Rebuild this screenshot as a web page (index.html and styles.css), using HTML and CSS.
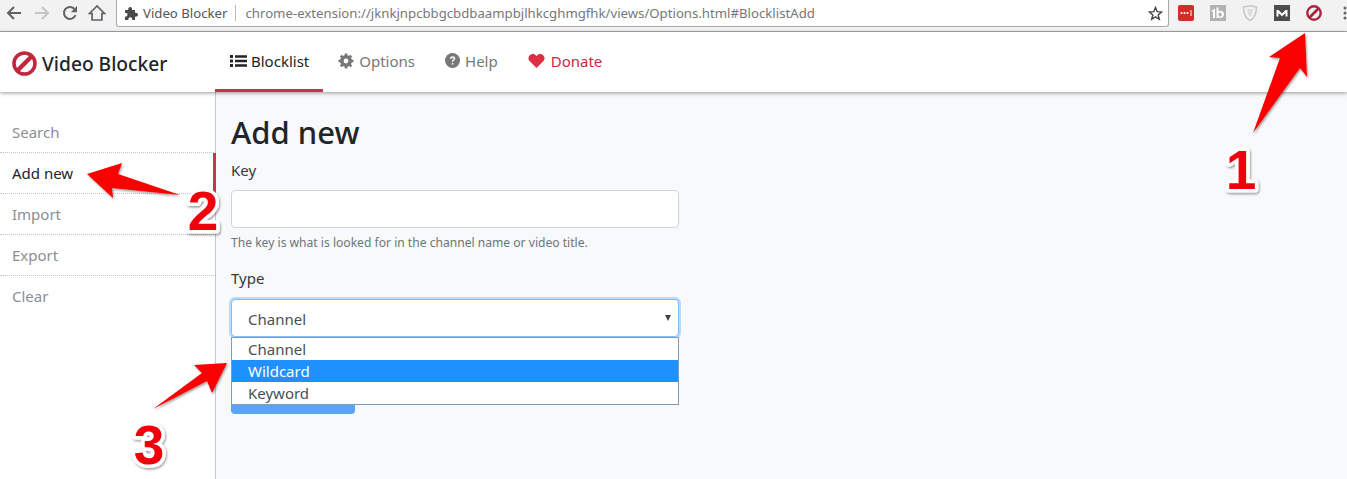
FILE: index.html
```html
<!DOCTYPE html>
<html lang="en">
<head>
<meta charset="utf-8">
<title>Video Blocker</title>
<link rel="stylesheet" href="styles.css">
</head>
<body>
<div class="chrome">
  <svg class="tb-ico back" width="16" height="16" viewBox="0 0 16 16"><path d="M15 8H2M8 2 2 8l6 6" fill="none" stroke="#5f6368" stroke-width="2"/></svg>
  <svg class="tb-ico fwd" width="16" height="16" viewBox="0 0 16 16"><path d="M1 8h13M8 2l6 6-6 6" fill="none" stroke="#c4c4c4" stroke-width="2"/></svg>
  <svg class="tb-ico reload" width="16" height="16" viewBox="0 0 16 16"><path d="M13.5 10.2A6 6 0 1 1 12.3 3.8" fill="none" stroke="#5f6368" stroke-width="2"/><path d="M15 1v6.2H8.8z" fill="#5f6368"/></svg>
  <svg class="tb-ico home" width="18" height="18" viewBox="0 0 18 18"><path d="M9 2 1.5 9.5h2.6V16h9.8V9.500h2.600z" fill="none" stroke="#5f6368" stroke-width="1.700"/></svg>
  <div class="omnibox">
    <svg class="puzzle" width="13" height="13" viewBox="0 0 13 13"><path d="M0 3h3.200C3 1 4 0 5.200 0s2.100 1 1.900 3H10v2.800c2-.3 3 .7 3 1.900s-1 2.200-3 1.900V13H7.200c.3-1.800-.7-2.700-1.900-2.700S3.100 11.200 3.400 13H0V9.600c1.600.2 2.500-.7 2.500-1.900S1.600 5.700 0 5.900z" fill="#4a4a4a"/></svg>
    <span class="site">Video Blocker</span>
    <span class="sep"></span>
    <span class="url">chrome-extension://jknkjnpcbbgcbdbaampbjlhkcghmgfhk/views/Options.html#BlocklistAdd</span>
    <svg class="star" width="15" height="15" viewBox="0 0 15 15"><path d="M7.500 1.500 9.200 5.700l4.500.3-3.500 2.900 1.100 4.400-3.800-2.400-3.800 2.400 1.100-4.400L1.300 6l4.500-.3z" fill="none" stroke="#444" stroke-width="1.400"/></svg>
  </div>
  <div class="exts">
    <svg width="16" height="16" viewBox="0 0 16 16"><rect width="16" height="16" rx="2" fill="#d32d27"/><g fill="#fff"><circle cx="3.500" cy="8" r="1.100"/><circle cx="6.500" cy="8" r="1.100"/><circle cx="9.500" cy="8" r="1.100"/><rect x="12.500" y="5" width="1" height="6"/></g></svg>
    <svg width="16" height="16" viewBox="0 0 16 16"><rect width="16" height="16" fill="#b3b3b3"/><path d="M1.500 5.500 5 3.500V13H3V6.500l-1.500.6zM6.500 2.500h2V6.300C10 5.300 14 5.700 14 9.300S10 14 8.500 12.300V13h-2zM8.500 8v3c1 .9 3.300.7 3.300-1.500S9.500 7.100 8.500 8z" fill="#fff"/></svg>
    <svg width="16" height="16" viewBox="0 0 16 16"><path d="M1.500 2 8 .8 14.500 2c0 6-1 10.500-6.500 13.500C2.500 12.500 1.500 8 1.500 2z" fill="none" stroke="#c6c8c6" stroke-width="1.500"/><path d="M5 4h6L9.200 11H6.800z" fill="#dcdedc"/></svg>
    <svg width="16" height="16" viewBox="0 0 16 16"><rect width="16" height="16" fill="#4d4d4d"/><path d="M2.500 11.500V5h2L8 8.500 11.500 5h2v6.500h-2V8L8 11.200 4.500 8v3.500z" fill="#fff"/></svg>
    <svg width="16" height="16" viewBox="0 0 16 16"><circle cx="8" cy="8" r="6.700" fill="none" stroke="#b0243f" stroke-width="2.400"/><path d="M3.500 12.500l9-9" stroke="#b0243f" stroke-width="2.800"/></svg>
    <svg class="dots" width="4" height="14" viewBox="0 0 4 14"><g fill="#666"><circle cx="2" cy="2" r="1.500"/><circle cx="2" cy="7" r="1.500"/><circle cx="2" cy="12" r="1.500"/></g></svg>
  </div>
</div>

<header class="navbar">
  <div class="brand">
    <svg width="25" height="25" viewBox="0 0 25 25"><circle cx="12.500" cy="12.500" r="10.500" fill="#fff" stroke="#c2263f" stroke-width="3.600"/><path d="M5 20 20 5" stroke="#c2263f" stroke-width="4.400"/></svg>
    <span>Video Blocker</span>
  </div>
  <nav class="tabs">
    <a class="tab active">
      <svg width="17" height="14" viewBox="0 0 17 14"><path d="M0 1h3v3H0zM0 5.500h3v3H0zM0 10h3v3H0zM5 1.200h12v2.600H5zM5 5.700h12v2.600H5zM5 10.200h12v2.600H5z" fill="#212529"/></svg>
      Blocklist
    </a>
    <a class="tab">
      <svg width="16" height="16" viewBox="0 0 16 16"><circle cx="8" cy="8" r="4.300" fill="none" stroke="#777" stroke-width="3.400"/><path d="M8 .5v15M.5 8h15M2.700 2.700l10.600 10.600M13.300 2.700 2.700 13.300" stroke="#777" stroke-width="2.600"/><circle cx="8" cy="8" r="2.400" fill="#fff"/></svg>
      Options
    </a>
    <a class="tab">
      <svg width="15" height="15" viewBox="0 0 15 15"><circle cx="7.500" cy="7.500" r="7.500" fill="#777"/><path d="M4.900 5.600c.2-3 5.400-3 5.400 0 0 1.800-2.100 1.800-2.100 3.200H6.800C6.800 6.800 8.700 6.800 8.700 5.600c0-1.200-2-1.100-2.200.3z" fill="#fff"/><rect x="6.800" y="10" width="1.500" height="1.600" fill="#fff"/></svg>
      Help
    </a>
    <a class="tab donate">
      <svg width="17" height="15" viewBox="0 0 17 15"><path d="M8.500 15 1.300 7.700C-2 3.500 4.800-2.200 8.500 3c3.700-5.200 10.500.5 7.200 4.700z" fill="#dc2f45"/></svg>
      Donate
    </a>
  </nav>
</header>

<div class="body">
  <aside class="sidebar">
    <a class="side-item">Search</a>
    <a class="side-item current">Add new</a>
    <a class="side-item">Import</a>
    <a class="side-item">Export</a>
    <a class="side-item last">Clear</a>
  </aside>
  <main class="content">
    <h1>Add new</h1>
    <form class="form">
      <label class="label">Key</label>
      <div class="input"></div>
      <p class="help">The key is what is looked for in the channel name or video title.</p>
      <label class="label type-label">Type</label>
      <div class="select-wrap">
        <div class="select">Channel<span class="caret"></span></div>
        <ul class="dropdown">
          <li>Channel</li>
          <li class="hl">Wildcard</li>
          <li>Keyword</li>
        </ul>
      </div>
      <div class="button"></div>
    </form>
  </main>
</div>

<svg class="annot" width="1347" height="479" viewBox="0 0 1347 479">
  <defs><filter id="sh" x="-20%" y="-20%" width="140%" height="140%"><feDropShadow dx="1" dy="1.500" stdDeviation="1.200" flood-color="#000" flood-opacity=".4"/></filter></defs>
  <g fill="#fb0006" filter="url(#sh)">
    <path d="M1305 33 1269 57 1280 58 1253 133 1300 68 1307 77z"/>
    <path d="M87 174 122 163 118 174 180 195 112 188 113 198z"/>
    <path d="M227 363 194 365 202 373 153 409 207 381 212 393z"/>
  </g>
  <g class="num" filter="url(#sh)">
    <text x="1241" y="189">1</text>
    <text x="203" y="230">2</text>
    <text x="149" y="464">3</text>
  </g>
</svg>
</body>
</html>
```

FILE: styles.css
```css
* { box-sizing: border-box; }
html, body { margin: 0; padding: 0; }
body {
  position: relative;
  width: 1347px;
  height: 479px;
  overflow: hidden;
  background: #fff;
  font-family: "Noto Sans", "Open Sans", sans-serif;
  color: #212529;
}

.chrome {
  display: flex;
  align-items: flex-start;
  height: 32px;
  background: #f2f2f2;
  border-bottom: 1px solid #a9a9a9;
}
.tb-ico { flex: none; margin-top: 5px; }
.back { margin-left: 6px; }
.fwd { margin-left: 12px; }
.reload { margin-left: 12px; }
.home { margin-left: 10px; margin-top: 4px; }
.omnibox {
  flex: none;
  display: flex;
  align-items: center;
  width: 1053px;
  height: 27px;
  margin-left: 10px;
  padding-left: 8px;
  background: #fff;
  border: 1px solid #a9a9a9;
  border-top: 0;
  border-radius: 0 0 3px 3px;
  font-size: 13.200px;
  white-space: nowrap;
}
.puzzle { flex: none; }
.site { margin-left: 5px; color: #555; }
.sep { width: 1px; height: 16px; margin: 0 9px 0 8px; background: #bbb; }
.url { color: #777; flex: 1; }
.star { flex: none; margin-right: 5px; }
.exts {
  display: flex;
  align-items: flex-start;
  gap: 16px;
  margin-left: 9px;
  padding-top: 5px;
}
.exts svg { flex: none; }
.exts .dots { margin-left: 5px; margin-top: 1px; }

.navbar {
  position: relative;
  z-index: 2;
  display: flex;
  align-items: stretch;
  height: 60px;
  background: #fff;
  box-shadow: 0 1px 4px rgba(0, 0, 0, .4);
}
.brand {
  display: flex;
  align-items: center;
  gap: 5px;
  width: 215px;
  padding: 3px 0 0 12px;
  font-size: 19.200px;
  font-weight: 500;
  color: #212529;
}
.tabs { display: flex; }
.tab {
  display: flex;
  align-items: center;
  gap: 5px;
  padding: 0 15px;
  font-size: 15px;
  color: #777;
  border-bottom: 3px solid transparent;
}
.tab.active { gap: 4px; padding-right: 14px; color: #212529; border-bottom-color: #c8354a; }
.tab.donate { gap: 6px; color: #c22b45; }

.body { display: flex; height: 387px; }
.sidebar {
  flex: none;
  width: 216px;
  padding-top: 20px;
  background: #fff;
  border-right: 1px solid #c8c8c8;
}
.side-item {
  display: block;
  height: 41px;
  padding: 9px 0 0 12px;
  margin-right: -1px;
  font-size: 15px;
  line-height: 22px;
  color: #8a8f94;
  border-bottom: 1px dotted #c4c4c4;
}
.side-item.current {
  color: #212529;
  border-right: 3px solid #c8354a;
}
.side-item.last { border-bottom: 0; }

.content {
  flex: 1;
  padding: 19px 0 0 15px;
  background: #f8f9fa;
}
h1 {
  margin: 0;
  font-size: 31px;
  font-weight: 500;
  line-height: 42px;
  color: #212529;
}
.form { position: relative; width: 448px; margin-top: 6px; }
.label {
  display: block;
  font-size: 15px;
  line-height: 22px;
  color: #333a40;
}
.input {
  height: 38px;
  margin-top: 9px;
  background: #fff;
  border: 1px solid #ced4da;
  border-radius: 4px;
}
.help {
  margin: 6px 0 0;
  font-size: 12.100px;
  line-height: 18px;
  color: #6c757d;
}
.type-label { margin-top: 15px; }
.select-wrap { position: relative; margin-top: 10px; }
.select {
  position: relative;
  height: 38px;
  padding-left: 16px;
  background: #fff;
  border: 1px solid #80bdff;
  border-radius: 4px;
  box-shadow: 0 0 0 2px rgba(0, 123, 255, .25);
  font-size: 15px;
  line-height: 38px;
  color: #495057;
}
.caret {
  position: absolute;
  right: 7px;
  top: 15px;
  border-left: 3px solid transparent;
  border-right: 3px solid transparent;
  border-top: 6px solid #444;
}
.dropdown {
  position: absolute;
  z-index: 1;
  left: 0;
  right: 0;
  top: 38px;
  margin: 0;
  padding: 0;
  list-style: none;
  height: 68px;
  background: #fff;
  border: 1px solid #7f9db9;
  font-size: 15px;
  color: #495057;
}
.dropdown li { height: 22px; padding-left: 16px; line-height: 22px; }
.dropdown .hl { background: #1e90ff; color: #fff; }
.button {
  width: 124px;
  height: 38px;
  margin-top: 39px;
  background: #5aa3f7;
  border-radius: 4px;
}

.annot { position: absolute; left: 0; top: 0; z-index: 5; pointer-events: none; }
.num text {
  font-family: "Liberation Sans", Arial, sans-serif;
  font-size: 55px;
  font-weight: 700;
  text-anchor: middle;
  fill: #f00008;
  stroke: #fff;
  stroke-width: 7px;
  stroke-linejoin: round;
  paint-order: stroke;
}
```
